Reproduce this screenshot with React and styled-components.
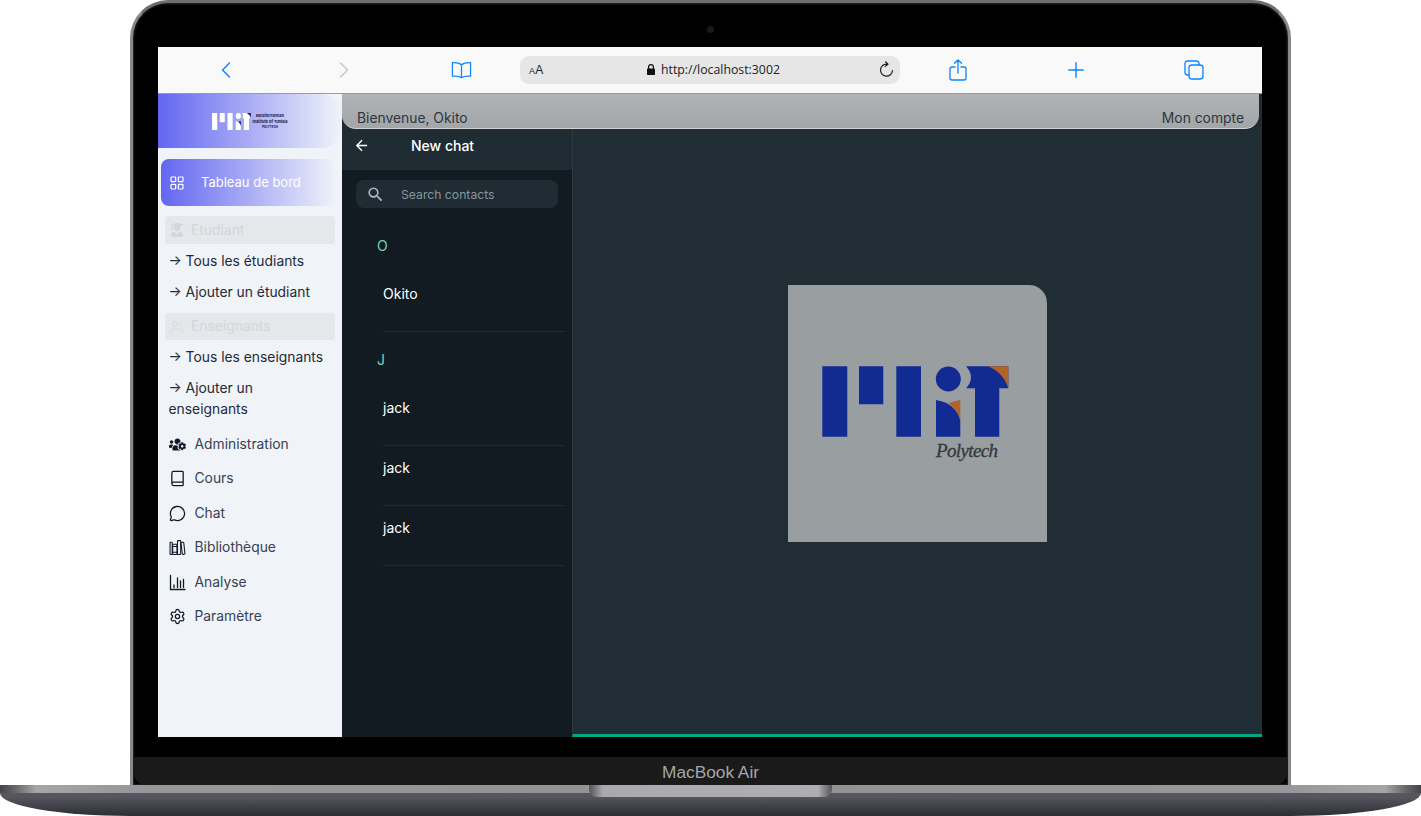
import React from 'react';
import styled, { createGlobalStyle } from 'styled-components';
import { LayoutGrid, Users, Book, MessageCircle, Settings } from 'lucide-react';
import { FaUserGraduate, FaUsersCog } from 'react-icons/fa';
import { IoLibraryOutline } from 'react-icons/io5';
import { MdSearch, MdArrowBack } from 'react-icons/md';

const GlobalStyle = createGlobalStyle`
  html, body {
    margin: 0;
    padding: 0;
    background: #ffffff;
    overflow: hidden;
  }
  * {
    box-sizing: border-box;
  }
`;

const Page = styled.div`
  width: 1421px;
  height: 816px;
  display: flex;
  flex-direction: column;
  overflow: hidden;
  font-family: Inter, "Liberation Sans", sans-serif;
`;

// laptop frame
const Lid = styled.div`
  width: 1161px;
  height: 785px;
  margin-left: 130px;
  display: flex;
  flex-direction: column;
  background: #000000;
  border: 3px solid #6d6d72;
  border-bottom: 0;
  border-left-color: #88888d;
  border-right-color: #88888d;
  border-radius: 38px 38px 0 0;
  box-shadow: inset 0 0 2px 1px #26262a;
`;

const TopBezel = styled.div`
  height: 44px;
  display: flex;
  align-items: center;
  justify-content: center;
  padding-top: 9px;
`;

const Camera = styled.div`
  width: 7px;
  height: 7px;
  border-radius: 50%;
  background: #19191d;
`;

const Screen = styled.div`
  width: 1104px;
  height: 690px;
  margin-left: 25px;
  display: flex;
  flex-direction: column;
  overflow: hidden;
`;

const Chin = styled.div`
  height: 28px;
  margin: 20px 1px 0;
  display: flex;
  align-items: center;
  justify-content: center;
  padding-top: 3px;
  background: #1a1a1a;
  border-radius: 0 0 12px 12px;
  color: #a6a6a8;
  font-family: "Liberation Sans", sans-serif;
  font-size: 17.300px;
`;

const Base = styled.div`
  height: 31px;
  background: linear-gradient(180deg, #5a5a60 0%, #55565d 40%, #3c3d45 75%, #2c2d35 100%);
  border-radius: 0 0 130px 130px / 0 0 23px 23px;
  overflow: hidden;
`;

const BaseEdge = styled.div`
  height: 8px;
  display: flex;
  justify-content: center;
  background: linear-gradient(90deg, #434348 0, #68686d 16px, #a6a6aa 36px, #98989c 130px, #919195 50%, #98989c 1291px, #a6a6aa 1385px, #68686d 1405px, #434348 100%);
`;

const Notch = styled.div`
  width: 243px;
  height: 12px;
  flex: none;
  background: linear-gradient(90deg, #55555a 0, #a9a9ae 14px, #adadb2 229px, #55555a 100%);
  border-radius: 0 0 8px 8px;
`;

// safari toolbar
const Toolbar = styled.div`
  height: 47px;
  flex: none;
  display: flex;
  align-items: center;
  padding: 0 9px 1px;
  background: #f9f9f9;
  border-bottom: 1px solid #9a9c9e;
`;

const ToolSlot = styled.div`
  width: ${(p) => p.$w || 118}px;
  display: flex;
  justify-content: center;
  align-items: center;
`;

const AddressBar = styled.div`
  width: 380px;
  height: 28px;
  display: flex;
  align-items: center;
  padding: 0 6px 0 9px;
  background: #e6e6e6;
  border-radius: 9px;
  color: #222222;
`;

const TextSize = styled.span`
  font-family: "Liberation Sans", sans-serif;
  font-size: 12px;
  width: 118px;
  letter-spacing: 0.2px;
  & small {
    font-size: 9px;
  }
`;

const Url = styled.span`
  flex: 1;
  display: flex;
  align-items: center;
  gap: 6px;
  font-family: "Open Sans", sans-serif;
  font-size: 12.300px;
`;

// app layout
const AppBody = styled.div`
  flex: 1;
  min-height: 0;
  display: flex;
`;

const Sidebar = styled.nav`
  width: 184px;
  flex: none;
  display: flex;
  flex-direction: column;
  background: #f0f4f9;
  color: #374151;
  font-size: 13.850px;
  line-height: 21px;
`;

const LogoCard = styled.div`
  height: 54px;
  flex: none;
  display: flex;
  align-items: center;
  justify-content: center;
  gap: 1px;
  background: linear-gradient(90deg, #6366f1 0%, #f0f4f9 100%);
  border-radius: 0 20px 20px 0;
`;

const LogoWords = styled.div`
  display: flex;
  flex-direction: column;
  align-items: center;
  gap: 1px;
  color: #14174f;
  font-size: 3.900px;
  line-height: 5px;
  font-weight: 700;
  white-space: nowrap;
  & span:last-child {
    font-size: 3px;
  }
`;

const ActiveItem = styled.div`
  height: 47px;
  margin: 11px 5px 0 3px;
  display: flex;
  align-items: center;
  gap: 16px;
  padding-left: 8px;
  background: linear-gradient(90deg, #6366f1 0%, #f0f4f9 100%);
  border-radius: 8px;
  color: #ffffff;
  font-size: 13px;
`;

const GroupLabel = styled.div`
  height: ${(p) => p.$h}px;
  margin: ${(p) => p.$top}px 7px 0;
  padding-left: 5px;
  display: flex;
  align-items: center;
  gap: 7px;
  background: #e5e7eb;
  border-radius: 4px;
  color: #d3d6dc;
`;

const SubList = styled.div`
  display: flex;
  flex-direction: column;
  gap: 10px;
  margin-top: 6.500px;
  padding: 0 12px 0 10.500px;
`;

const SubLink = styled.div`
  color: #1f2937;
`;

const MenuList = styled.div`
  display: flex;
  flex-direction: column;
  gap: 13.500px;
  margin-top: 14px;
  padding-left: 11px;
`;

const MenuItem = styled.div`
  display: flex;
  align-items: center;
  gap: 9px;
  & > svg {
    width: 17px;
    height: 17px;
    flex: none;
    margin-left: -0.500px;
    color: #111827;
  }
`;

// main area
const Main = styled.div`
  flex: 1;
  min-width: 0;
  display: flex;
  flex-direction: column;
  background: #202c33;
`;

const TopBar = styled.header`
  height: 35px;
  flex: none;
  margin-right: 3px;
  display: flex;
  align-items: flex-end;
  justify-content: space-between;
  padding: 0 15px;
  background: linear-gradient(180deg, #b1b4b6 0%, #a2a6a9 100%);
  border-bottom: 1px solid #d3d5d7;
  border-radius: 0 0 14px 14px;
  color: #2d3640;
  font-size: 13.850px;
  line-height: 20px;
`;

const ChatArea = styled.div`
  flex: 1;
  min-height: 0;
  display: flex;
`;

const ContactsPane = styled.aside`
  width: 230px;
  flex: none;
  display: flex;
  flex-direction: column;
  background: #111b21;
`;

const ContactsHeader = styled.div`
  height: 41px;
  flex: none;
  display: flex;
  align-items: center;
  gap: 41px;
  padding: 0 0 9px 11px;
  background: #202c33;
  color: #ffffff;
  font-size: 14px;
  font-weight: 500;
`;

const SearchBox = styled.div`
  height: 28px;
  margin: 10px 14px 0;
  display: flex;
  align-items: center;
  gap: 16px;
  padding-left: 10px;
  background: #202c33;
  border-radius: 8px;
  color: #8696a0;
  font-size: 12.200px;
`;

const Letter = styled.div`
  height: ${(p) => p.$h}px;
  display: flex;
  align-items: flex-end;
  padding: 0 0 16px 35px;
  color: #6fd6bc;
  font-size: 14px;
  line-height: 20px;
`;

const Contact = styled.div`
  height: 60px;
  margin: 0 7px 0 41px;
  padding-top: 12px;
  border-bottom: 1px solid #1d2a31;
  color: #ffffff;
  font-size: 14px;
  line-height: 20px;
`;

const Welcome = styled.section`
  flex: 1;
  display: flex;
  align-items: center;
  justify-content: center;
  padding: 0 1px 35px 0;
  background: #202d35;
  border-left: 1px solid #2a3942;
  border-bottom: 3px solid #00a884;
`;

const BigLogo = styled.div`
  width: 259px;
  height: 257px;
  margin-top: -2px;
  background: #999ea1;
  border-radius: 0 18px 0 0;
`;

const Mark = ({ x, y, w, h, body, accent }) => (
  <svg x={x} y={y} width={w} height={h} viewBox="34 81 187 71" preserveAspectRatio="none">
    <path fill={body} d="M34.300 81.300h25v70.400h-25zM71 81.300h24.300v38H71zM108.300 81.300H133v70.400h-24.700z" />
    <circle fill={body} cx="160.300" cy="94" r="12.500" />
    <path fill={body} d="M148 115c12 2 21 8 24.300 20v16.700h-24.300z" />
    <path fill={accent} d="M160 118l12.300-3v20c-2-7-6-13-12.300-17z" />
    <path fill={body} d="M178 81.300h42.300v22H211.300v48.400H187v-48.400h-9c3-3 5-7 5-11s-2-8-5-11z" />
    <path fill={accent} d="M200 81.300h20.300v22c-3-10-10-18-20.300-22z" />
  </svg>
);

const IconStroke = styled.svg`
  display: block;
  fill: none;
  stroke: ${(p) => p.$color || '#0a84ff'};
  stroke-width: ${(p) => p.$sw || 1.5};
  stroke-linecap: round;
  stroke-linejoin: round;
`;

function App() {
  return (
    <Page>
      <GlobalStyle />
      <Lid>
        <TopBezel>
          <Camera />
        </TopBezel>
        <Screen>
          <Toolbar>
            <ToolSlot>
              <IconStroke width="10" height="16" viewBox="0 0 10 16" $sw={1.4}>
                <path d="M8.500 1L1.500 8l7 7" />
              </IconStroke>
            </ToolSlot>
            <ToolSlot>
              <IconStroke width="10" height="16" viewBox="0 0 10 16" $sw={1.4} $color="#c4c4c6">
                <path d="M1.500 1l7 7-7 7" />
              </IconStroke>
            </ToolSlot>
            <ToolSlot $w={117}>
              <IconStroke width="21" height="18" viewBox="0 0 22 18" $sw={1.3}>
                <path d="M11 3.500C9 1.800 5.500 1 1.500 1.200V15.500C5.500 15.200 9 15.800 11 17c2-1.200 5.500-1.800 9.500-1.500V1.200C16.500 1 13 1.800 11 3.500zM11 3.500V17" />
              </IconStroke>
            </ToolSlot>
            <AddressBar>
              <TextSize>
                <small>A</small>A
              </TextSize>
              <Url>
                <svg width="8" height="11" viewBox="0 0 8 11">
                  <path fill="#111" d="M1 4.500V3a3 3 0 0 1 6 0v1.500h.3c.4 0 .7.300.7.700v5c0 .4-.3.800-.7.800H.7c-.4 0-.7-.4-.7-.8v-5c0-.4.300-.7.700-.7zM2.200 4.500h3.600V3a1.800 1.800 0 0 0-3.600 0z" />
                </svg>
                http://localhost:3002
              </Url>
              <IconStroke width="15" height="17" viewBox="0 0 15 17" $sw={1.2} $color="#1d1d1f">
                <path d="M8.500 3.200A6 6 0 1 0 13.500 9.500M6.500 0.800l2.500 2.400-2.800 2.200" />
              </IconStroke>
            </AddressBar>
            <ToolSlot $w={116}>
              <IconStroke width="18" height="22" viewBox="0 0 18 22" $sw={1.3}>
                <path d="M6 8H3a2 2 0 0 0-2 2v9a2 2 0 0 0 2 2h12a2 2 0 0 0 2-2v-9a2 2 0 0 0-2-2h-3M9 14V1M5.500 4.300L9 1l3.500 3.300" />
              </IconStroke>
            </ToolSlot>
            <ToolSlot $w={119}>
              <IconStroke width="16" height="16" viewBox="0 0 16 16" $sw={1.4}>
                <path d="M8 .8v14.400M.8 8h14.400" />
              </IconStroke>
            </ToolSlot>
            <ToolSlot>
              <IconStroke width="20" height="20" viewBox="0 0 20 20" $sw={1.3}>
                <rect x="5" y="5" width="14" height="14" rx="3" />
                <path d="M5 15H3.500A2.500 2.500 0 0 1 1 12.500V3.500A2.500 2.500 0 0 1 3.500 1H12.500A2.500 2.500 0 0 1 15 3.500V5" />
              </IconStroke>
            </ToolSlot>
          </Toolbar>
          <AppBody>
            <Sidebar>
              <LogoCard>
                <svg width="39" height="17">
                  <Mark w={39} h={17} body="#ffffff" accent="#14174f" />
                </svg>
                <LogoWords>
                  <span>Mediterranean</span>
                  <span>Institute of Tunisia</span>
                  <span>POLYTECH</span>
                </LogoWords>
              </LogoCard>
              <ActiveItem>
                <LayoutGrid size={16} strokeWidth={1.8} />
                Tableau de bord
              </ActiveItem>
              <GroupLabel $top={10} $h={28}>
                <FaUserGraduate size={14} />
                Etudiant
              </GroupLabel>
              <SubList>
                <SubLink>→ Tous les étudiants</SubLink>
                <SubLink>→ Ajouter un étudiant</SubLink>
              </SubList>
              <GroupLabel $top={10.5} $h={27}>
                <Users size={14} strokeWidth={1.5} />
                Enseignants
              </GroupLabel>
              <SubList>
                <SubLink>→ Tous les enseignants</SubLink>
                <SubLink>→ Ajouter un enseignants</SubLink>
              </SubList>
              <MenuList>
                <MenuItem>
                  <FaUsersCog />
                  Administration
                </MenuItem>
                <MenuItem>
                  <Book strokeWidth={1.8} />
                  Cours
                </MenuItem>
                <MenuItem>
                  <MessageCircle strokeWidth={1.8} />
                  Chat
                </MenuItem>
                <MenuItem>
                  <IoLibraryOutline />
                  Bibliothèque
                </MenuItem>
                <MenuItem>
                  <svg viewBox="0 0 17 17" fill="none" stroke="currentColor" strokeWidth="1.300" strokeLinecap="round">
                    <path d="M1.500 1.500v14h14.500M5 13.500v-2.500M8.500 13.500V4M11.500 13.500V7M14.500 13.500V5.500" />
                  </svg>
                  Analyse
                </MenuItem>
                <MenuItem>
                  <Settings strokeWidth={1.8} />
                  Paramètre
                </MenuItem>
              </MenuList>
            </Sidebar>
            <Main>
              <TopBar>
                <span>Bienvenue, Okito</span>
                <span>Mon compte</span>
              </TopBar>
              <ChatArea>
                <ContactsPane>
                  <ContactsHeader>
                    <MdArrowBack size={17} />
                    New chat
                  </ContactsHeader>
                  <SearchBox>
                    <MdSearch size={19} color="#aebac1" />
                    Search contacts
                  </SearchBox>
                  <Letter $h={64}>O</Letter>
                  <Contact>Okito</Contact>
                  <Letter $h={54}>J</Letter>
                  <Contact>jack</Contact>
                  <Contact>jack</Contact>
                  <Contact>jack</Contact>
                </ContactsPane>
                <Welcome>
                  <BigLogo>
                    <svg width="259" height="257" viewBox="0 0 259 257">
                      <Mark x={34} y={81} w={187} h={71} body="#122b93" accent="#b3622a" />
                      <text x="148" y="172" fontFamily="'Liberation Serif', serif" fontStyle="italic" fontSize="19" stroke="#33383c" strokeWidth="0.300" fill="#33383c" textLength="62">
                        Polytech
                      </text>
                    </svg>
                  </BigLogo>
                </Welcome>
              </ChatArea>
            </Main>
          </AppBody>
        </Screen>
        <Chin>MacBook Air</Chin>
      </Lid>
      <Base>
        <BaseEdge>
          <Notch />
        </BaseEdge>
      </Base>
    </Page>
  );
}

export default App;
